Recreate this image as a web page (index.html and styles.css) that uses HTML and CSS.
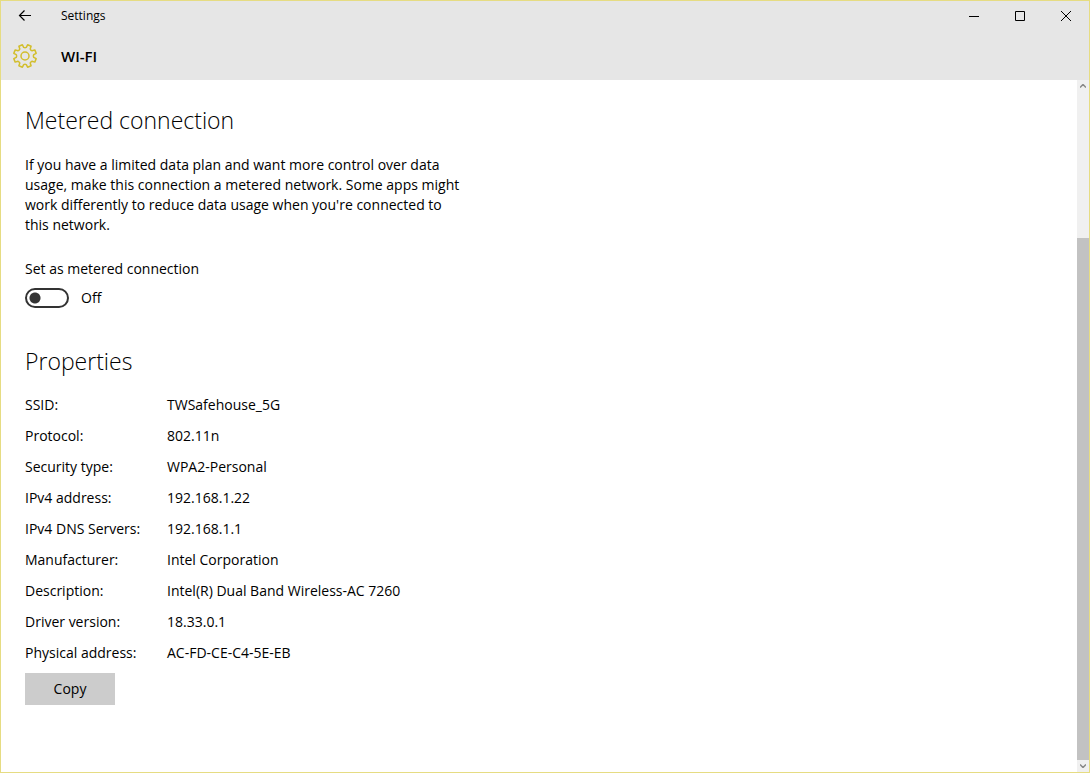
FILE: index.html
```html
<!DOCTYPE html>
<html lang="en">
<head>
    <meta charset="UTF-8">
    <meta name="viewport" content="width=device-width, initial-scale=1.0">
    <title>Settings</title>
    <link rel="stylesheet" href="styles.css">
</head>
<body>
    <div class="window">
        <header class="header">
            <div class="titlebar">
                <button class="back" type="button" aria-label="Back">
                    <svg width="14" height="12" viewBox="0 0 14 12"><path d="M13 5.5H1.5M6.5.5l-5 5 5 5"/></svg>
                </button>
                <span class="app-name">Settings</span>
                <div class="controls">
                    <button type="button" aria-label="Minimize">
                        <svg width="10" height="10" viewBox="0 0 10 10"><path d="M0 5.5h10"/></svg>
                    </button>
                    <button type="button" aria-label="Maximize">
                        <svg width="10" height="10" viewBox="0 0 10 10"><path d="M.5.5h9v9h-9z"/></svg>
                    </button>
                    <button type="button" aria-label="Close">
                        <svg width="10" height="10" viewBox="0 0 10 10"><path d="M0 0l10 10M10 0L0 10"/></svg>
                    </button>
                </div>
            </div>
            <div class="page-title">
                <svg class="gear" width="26" height="26" viewBox="-13 -13 26 26">
                    <path d="M1.3-8.7L2.6-11.2 6.1-9.8 5.2-7.1Q5.7-5.7 7.1-5.2L9.8-6.1 11.2-2.6 8.7-1.3Q8 0 8.7 1.3L11.2 2.6 9.8 6.1 7.1 5.2Q5.7 5.7 5.2 7.1L6.1 9.8 2.6 11.2 1.3 8.7Q0 8-1.3 8.7L-2.6 11.2-6.1 9.8-5.2 7.1Q-5.7 5.7-7.1 5.2L-9.8 6.1-11.2 2.6-8.7 1.3Q-8 0-8.7-1.3L-11.2-2.6-9.8-6.1-7.1-5.2Q-5.7-5.7-5.2-7.1L-6.1-9.8-2.6-11.2-1.3-8.7Q0-8 1.3-8.7z"/>
                    <circle r="4"/>
                </svg>
                <h1>WI-FI</h1>
            </div>
        </header>
        <div class="body">
            <main class="content">
                <h2>Metered connection</h2>
                <p class="description">If you have a limited data plan and want more control over data usage, make this connection a metered network. Some apps might work differently to reduce data usage when you're connected to this network.</p>
                <label class="metered-label" for="metered">Set as metered connection</label>
                <div class="toggle-row">
                    <input class="toggle" type="checkbox" role="switch" id="metered">
                    <span>Off</span>
                </div>
                <h2>Properties</h2>
                <table class="properties">
                    <tr><th scope="row">SSID:</th><td>TWSafehouse_5G</td></tr>
                    <tr><th scope="row">Protocol:</th><td>802.11n</td></tr>
                    <tr><th scope="row">Security type:</th><td>WPA2-Personal</td></tr>
                    <tr><th scope="row">IPv4 address:</th><td>192.168.1.22</td></tr>
                    <tr><th scope="row">IPv4 DNS Servers:</th><td>192.168.1.1</td></tr>
                    <tr><th scope="row">Manufacturer:</th><td>Intel Corporation</td></tr>
                    <tr><th scope="row">Description:</th><td>Intel(R) Dual Band Wireless-AC 7260</td></tr>
                    <tr><th scope="row">Driver version:</th><td>18.33.0.1</td></tr>
                    <tr><th scope="row">Physical address:</th><td>AC-FD-CE-C4-5E-EB</td></tr>
                </table>
                <button class="copy" type="button">Copy</button>
            </main>
            <div class="scrollbar">
                <button type="button" aria-label="Scroll up">
                    <svg width="6" height="4" viewBox="0 0 6 4"><path d="M0 3.5l3-3 3 3"/></svg>
                </button>
                <div class="track"></div>
                <div class="thumb"></div>
                <button type="button" aria-label="Scroll down">
                    <svg width="6" height="4" viewBox="0 0 6 4"><path d="M0 .5l3 3 3-3"/></svg>
                </button>
            </div>
        </div>
    </div>
</body>
</html>
```

FILE: styles.css
```css
* {
    box-sizing: border-box;
}
body {
    margin: 0;
    font-family: "Open Sans", "Noto Sans", sans-serif;
    font-size: 14px;
    line-height: 20px;
    color: #000;
    background: #fff;
}
button {
    display: flex;
    align-items: center;
    justify-content: center;
    padding: 0;
    border: 0;
    background: none;
    font: inherit;
    color: inherit;
}
svg {
    display: block;
    fill: none;
    stroke: #000;
}
.window {
    display: flex;
    flex-direction: column;
    min-height: 100vh;
    border: 1px solid #e6dc82;
}

/* Header */
.header {
    background: #e6e6e6;
}
.titlebar {
    display: flex;
    align-items: center;
    height: 30px;
}
.back {
    width: 48px;
    height: 30px;
}
.back svg {
    stroke-width: 1.2;
}
.app-name {
    margin-left: 12px;
    font-size: 12px;
}
.controls {
    display: flex;
    margin-left: auto;
}
.controls button {
    width: 46px;
    height: 30px;
}
.page-title {
    display: flex;
    align-items: center;
    gap: 23px;
    height: 49px;
    padding-left: 11px;
}
.gear {
    stroke: #d2be2d;
    stroke-width: 1.5;
    stroke-linejoin: round;
}
h1 {
    margin: 0;
    font-size: 15px;
    font-weight: 600;
}

/* Content */
.body {
    display: flex;
    flex: 1;
}
.content {
    flex: 1;
    padding: 24px;
}
h2 {
    margin: 0;
    font-size: 23px;
    font-weight: 300;
    line-height: 32px;
}
.description {
    max-width: 442px;
    margin: 19px 0 24px;
}
.metered-label {
    display: block;
}
.toggle-row {
    display: flex;
    align-items: center;
    gap: 12px;
    margin: 9px 0 37px;
}
.toggle {
    appearance: none;
    width: 44px;
    height: 20px;
    margin: 0;
    border: 2px solid #333;
    border-radius: 10px;
    background: radial-gradient(circle at 8px 8px, #333 5px, transparent 6px);
}
.toggle:checked {
    background: radial-gradient(circle at 32px 8px, #333 5px, transparent 6px);
}
.properties {
    margin-top: 12px;
    border-collapse: collapse;
}
.properties th,
.properties td {
    height: 31px;
    padding: 0;
    text-align: left;
    font-weight: 400;
}
.properties th {
    width: 142px;
}
.copy {
    width: 90px;
    height: 32px;
    margin-top: 5px;
    background: #ccc;
}

/* Scrollbar */
.scrollbar {
    display: flex;
    flex-direction: column;
    width: 12px;
    background: #f0f0f0;
}
.scrollbar button {
    height: 12px;
}
.scrollbar svg {
    stroke: #888;
    stroke-width: 1.5;
}
.track {
    flex: 146;
}
.thumb {
    flex: 522;
    background: #c2c2c2;
}
```
